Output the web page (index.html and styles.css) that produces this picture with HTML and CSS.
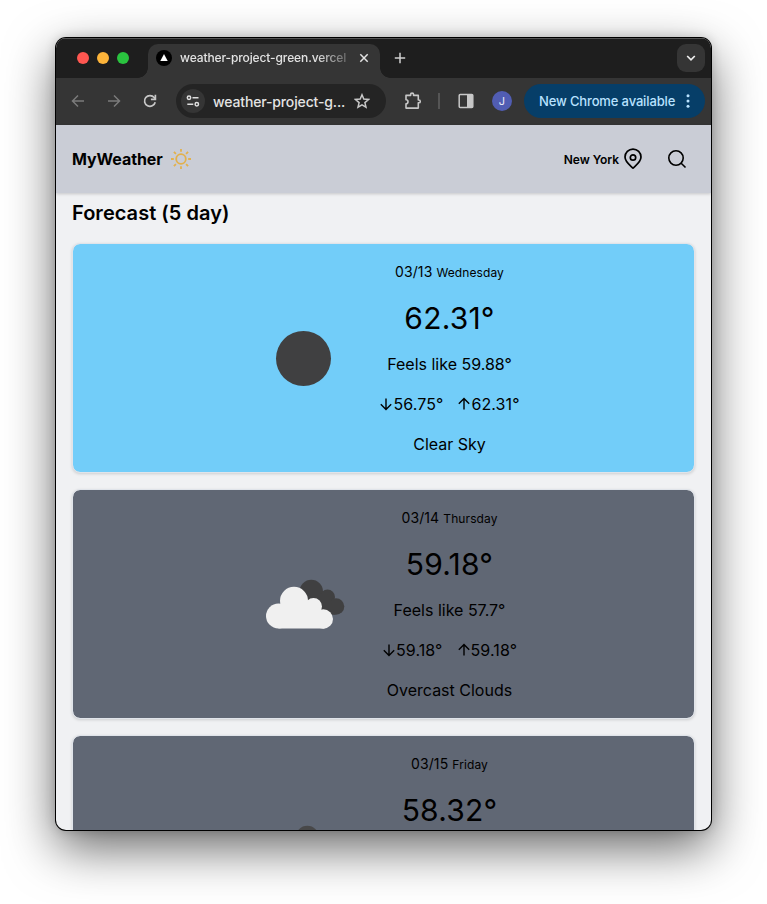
FILE: index.html
```html
<!DOCTYPE html>
<html lang="en">
<head>
<meta charset="utf-8">
<title>MyWeather</title>
<link rel="stylesheet" href="styles.css">
</head>
<body>
<div class="window">
  <div class="tabstrip">
    <div class="lights"><i class="red"></i><i class="amber"></i><i class="green"></i></div>
    <div class="tab">
      <svg class="favicon" width="16" height="16" viewBox="0 0 16 16"><circle cx="8" cy="8" r="8" fill="#000"/><path d="M8 4l3.700 7H4.300z" fill="#fff"/></svg>
      <span class="tab-title">weather-project-green.vercel</span>
      <svg width="10" height="10" viewBox="0 0 10 10" fill="none" stroke="#e3e3e3" stroke-width="1.500"><path d="M1.300 1.300l7.400 7.400M8.700 1.300L1.300 8.700"/></svg>
    </div>
    <svg class="new-tab" width="12" height="12" viewBox="0 0 12 12" fill="none" stroke="#d0d0d0" stroke-width="1.500"><path d="M6 .8v10.400M.8 6h10.400"/></svg>
    <div class="tab-search"><svg width="10" height="8" viewBox="0 0 10 8" fill="none" stroke="#eee" stroke-width="1.700"><path d="M1.200 2L5 5.800 8.800 2"/></svg></div>
  </div>
  <div class="toolbar">
    <svg class="nav" width="14" height="14" viewBox="0 0 14 14" fill="none" stroke="#7b7b7b" stroke-width="1.500"><path d="M13 7H2M7 1.500L1.500 7 7 12.500"/></svg>
    <svg class="nav" width="14" height="14" viewBox="0 0 14 14" fill="none" stroke="#7b7b7b" stroke-width="1.500"><path d="M1 7h11M7 1.500L12.500 7 7 12.500"/></svg>
    <svg class="nav reload" width="14" height="14" viewBox="0 0 14 14" fill="none" stroke="#c7c7c7" stroke-width="1.700"><path d="M12.200 8.200A5.400 5.400 0 1 1 11.200 3.600L12 4.600"/><path d="M12.400 .8v4.500H7.900"/></svg>
    <div class="omnibox">
      <span class="site"><svg width="14" height="12" viewBox="0 0 14 12" fill="none" stroke="#dedede" stroke-width="1.500"><circle cx="3" cy="2.800" r="1.700"/><path d="M6.500 2.800h6M1.300 9.200h6"/><circle cx="10.800" cy="9.200" r="1.700"/></svg></span>
      <span class="url">weather-project-g...</span>
      <svg width="16" height="16" viewBox="0 0 16 16" fill="none" stroke="#c7c7c7" stroke-width="1.500"><path d="M8 1.800l1.800 4.300 4.700.4-3.600 3.100 1.100 4.600L8 11.800l-4 2.400 1.100-4.600L1.500 6.500l4.700-.4z"/></svg>
    </div>
    <svg class="puzzle" width="18" height="18" viewBox="0 0 18 18" fill="none" stroke="#c7c7c7" stroke-width="1.600" stroke-linejoin="round"><path d="M2 3.400h4.600V2.600a1.500 1.500 0 0 1 3 0v.8h4.700V8h.6a1.400 1.400 0 0 1 0 2.800h-.6v5.300H2v-4.300a2 2 0 0 0 0-4z"/></svg>
    <span class="divider"></span>
    <svg class="panel" width="16" height="16" viewBox="0 0 16 16"><rect x="1.200" y="1.500" width="13.600" height="13" rx="1" fill="none" stroke="#c7c7c7" stroke-width="1.500"/><path d="M9 1.500h5.800v13H9z" fill="#c7c7c7"/></svg>
    <span class="avatar">J</span>
    <div class="update"><span>New Chrome available</span><svg width="4" height="14" viewBox="0 0 4 14" fill="#b9e2ff"><circle cx="2" cy="1.700" r="1.500"/><circle cx="2" cy="7" r="1.500"/><circle cx="2" cy="12.300" r="1.500"/></svg></div>
  </div>
  <header class="app-header">
    <span class="brand">MyWeather</span>
    <svg class="sun" width="24" height="24" viewBox="0 0 24 24" fill="none" stroke="#e2b14d" stroke-width="1.800"><circle cx="12" cy="12" r="4.800"/><path d="M12 2v2.800M12 19.200V22M2 12h2.800M19.200 12H22M4.900 4.900l2 2M17.100 17.100l2 2M4.900 19.100l2-2M17.100 6.900l2-2"/></svg>
    <span class="city">New York</span>
    <svg class="pin" width="24" height="24" viewBox="0 0 24 24" fill="none" stroke="#000" stroke-width="1.700" stroke-linejoin="round"><path d="M20 10.100c0 5.200-5.700 8.700-8 11-2.300-2.300-8-5.800-8-11a8 8 0 0 1 16 0z"/><circle cx="12" cy="10.500" r="2.700"/></svg>
    <svg class="search" width="24" height="24" viewBox="0 0 24 24" fill="none" stroke="#000" stroke-width="1.600"><circle cx="11" cy="11" r="7.200"/><path d="M16.200 16.200l4.300 4.300"/></svg>
  </header>
  <main class="forecast">
    <h2>Forecast (5 day)</h2>
    <article class="card clear">
      <svg class="weather" width="100" height="100" viewBox="0 0 100 100"><circle cx="49.500" cy="50.500" r="27.500" fill="#404041"/></svg>
      <div class="info">
        <p class="date">03/13 <small>Wednesday</small></p>
        <p class="temp">62.31°</p>
        <p class="feels">Feels like 59.88°</p>
        <p class="range"><svg class="arrow" width="14" height="16" viewBox="0 0 14 16"><path d="M7 2.500v11M1.800 8.300L7 13.500l5.200-5.200"/></svg><span>56.75°</span><svg class="arrow up" width="14" height="16" viewBox="0 0 14 16"><path d="M7 13.500v-11M1.800 7.700L7 2.500l5.200 5.200"/></svg><span>62.31°</span></p>
        <p>Clear Sky</p>
      </div>
    </article>
    <article class="card clouds">
      <svg class="weather" width="100" height="100" viewBox="0.500 0 100 100">
        <g fill="#404041"><circle cx="57.800" cy="37.500" r="11.700"/><circle cx="74" cy="43" r="7.500"/><circle cx="82.500" cy="52.500" r="8.300"/><path d="M50 40h24l8 20.800H60z"/></g>
        <g fill="#f0f0f0"><circle cx="40.500" cy="46.800" r="14"/><circle cx="60" cy="52.500" r="8.500"/><circle cx="25" cy="62" r="12.500"/><circle cx="69.800" cy="65" r="9.700"/><path d="M25 50h38l8 13v11.600H25z"/></g>
      </svg>
      <div class="info">
        <p class="date">03/14 <small>Thursday</small></p>
        <p class="temp">59.18°</p>
        <p class="feels">Feels like 57.7°</p>
        <p class="range"><svg class="arrow" width="14" height="16" viewBox="0 0 14 16"><path d="M7 2.500v11M1.800 8.300L7 13.500l5.200-5.200"/></svg><span>59.18°</span><svg class="arrow up" width="14" height="16" viewBox="0 0 14 16"><path d="M7 13.500v-11M1.800 7.700L7 2.500l5.200 5.200"/></svg><span>59.18°</span></p>
        <p>Overcast Clouds</p>
      </div>
    </article>
    <article class="card clouds">
      <svg class="weather" width="100" height="100" viewBox="0.500 0 100 100"><circle cx="57.800" cy="37.500" r="11.700" fill="#484849" transform="translate(-4 0)"/></svg>
      <div class="info">
        <p class="date">03/15 <small>Friday</small></p>
        <p class="temp">58.32°</p>
      </div>
    </article>
  </main>
</div>
</body>
</html>
```
FILE: styles.css
```css
* { box-sizing: border-box; }
body {
  margin: 0;
  height: 904px;
  padding: 38px 56px 0;
  overflow: hidden;
  background: #fff;
  color: #000;
  font-family: Inter, "Liberation Sans", sans-serif;
}
svg { display: block; flex: none; }
p, h2 { margin: 0; }
.window {
  width: 655px;
  height: 792px;
  display: flex;
  flex-direction: column;
  overflow: hidden;
  border-radius: 10px;
  background: #f0f1f3;
  box-shadow: 0 0 0 1px #000, 0 18px 50px rgba(0, 0, 0, .6), 0 0 12px rgba(0, 0, 0, .2);
}

.tabstrip {
  flex: none;
  height: 40px;
  display: flex;
  align-items: center;
  padding: 0 6px 1px 0;
  background: #1e1e1e;
  border-top: 1px solid #555;
}
.lights { display: flex; gap: 8px; padding-left: 21px; width: 92px; }
.lights i { width: 12px; height: 12px; border-radius: 50%; }
.red { background: #ff5751; }
.amber { background: #fdb43a; }
.green { background: #2ac33f; }
.tab {
  position: relative;
  align-self: flex-end;
  width: 232px;
  height: 34px;
  margin-bottom: -1px;
  padding: 0 11px 6px 8px;
  display: flex;
  align-items: center;
  background: #353535;
  border-radius: 10px 10px 0 0;
}
.tab::before, .tab::after {
  content: "";
  position: absolute;
  bottom: 0;
  width: 10px;
  height: 10px;
}
.tab::before { left: -10px; background: radial-gradient(circle at 0 0, #1e1e1e 9.500px, #353535 10px); }
.tab::after { right: -10px; background: radial-gradient(circle at 100% 0, #1e1e1e 9.500px, #353535 10px); }
.tab-title {
  width: 166px;
  margin: -1px 13px 0 8px;
  overflow: hidden;
  white-space: nowrap;
  font-size: 12px;
  font-weight: 500;
  letter-spacing: -.11px;
  color: #e3e3e3;
  -webkit-mask-image: linear-gradient(90deg, #000 82%, rgba(0, 0, 0, .3) 100%);
  mask-image: linear-gradient(90deg, #000 82%, rgba(0, 0, 0, .3) 100%);
}
.new-tab { margin-left: 14px; }
.tab-search {
  width: 28px;
  height: 28px;
  margin-left: auto;
  display: grid;
  place-items: center;
  border-radius: 9px;
  background: #353535;
}
.toolbar {
  flex: none;
  height: 47px;
  padding: 0 6px 1px 15px;
  display: flex;
  align-items: center;
  background: #353535;
}
.nav { margin-right: 22px; }
.reload { margin-right: 19px; }
.omnibox {
  width: 210px;
  height: 34px;
  padding: 0 16px 0 5px;
  display: flex;
  align-items: center;
  flex: none;
  border-radius: 17px;
  background: #242424;
}
.site {
  width: 24px;
  height: 24px;
  display: grid;
  place-items: center;
  border-radius: 50%;
  background: #353535;
}
.url { flex: 1; margin-left: 8px; font-size: 14px; font-weight: 500; letter-spacing: -.14px; color: #e3e3e3; white-space: nowrap; }
.puzzle { margin-left: 18px; }
.divider { flex: none; width: 2px; height: 16px; margin: 0 18px 0 16px; background: #555; }
.avatar {
  flex: none;
  width: 20px;
  height: 20px;
  margin-left: 18px;
  border-radius: 50%;
  background: #515db3;
  color: #e8eaf6;
  font-size: 11px;
  line-height: 20px;
  text-align: center;
}
.update {
  flex: none;
  width: 181px;
  height: 34px;
  margin-left: auto;
  padding: 0 15px;
  display: flex;
  align-items: center;
  justify-content: space-between;
  border-radius: 17px;
  background: #063e68;
  color: #b9e2ff;
  font-size: 13px;
  font-weight: 500;
  letter-spacing: -.14px;
  white-space: nowrap;
}

.app-header {
  flex: none;
  height: 68px;
  padding: 0 22px 0 16px;
  display: flex;
  align-items: center;
  background: #cacdd6;
  box-shadow: 0 1px 3px rgba(0, 0, 0, .18);
}
.brand { font-size: 16px; font-weight: 700; letter-spacing: -.07px; }
.sun { margin-left: 6px; }
.city { margin-left: auto; font-size: 12px; font-weight: 600; letter-spacing: -.05px; }
.pin { margin: 0 20px 0 2px; }
.forecast { padding: 4px 16px 0; display: flex; flex-direction: column; gap: 16px; }
h2 { height: 30px; font-size: 20px; font-weight: 600; line-height: 32px; letter-spacing: .03px; }
.card {
  height: 230px;
  flex: none;
  padding: 16px 0 16px 16px;
  display: flex;
  align-items: center;
  justify-content: center;
  gap: 16px;
  border: 1px solid #e0e4ea;
  border-radius: 8px;
  background-clip: padding-box;
  box-shadow: 0 1px 3px rgba(0, 0, 0, .15);
}
.clear { background-color: #72cdf9; }
.clouds { background-color: #606774; }
.info {
  align-self: flex-start;
  width: 160px;
  display: flex;
  flex-direction: column;
  align-items: center;
  gap: 16px;
  font-size: 16px;
  line-height: 24px;
  white-space: nowrap;
}
.date { font-size: 14px; letter-spacing: .1px; }
.date small { font-size: 12px; }
.temp { margin-top: -1px; font-size: 30px; line-height: 36px; letter-spacing: .2px; }
.range { display: flex; align-items: center; letter-spacing: .1px; }
.up { margin-left: 14px; }
.arrow { fill: none; stroke: #000; stroke-width: 1.400; }
```
